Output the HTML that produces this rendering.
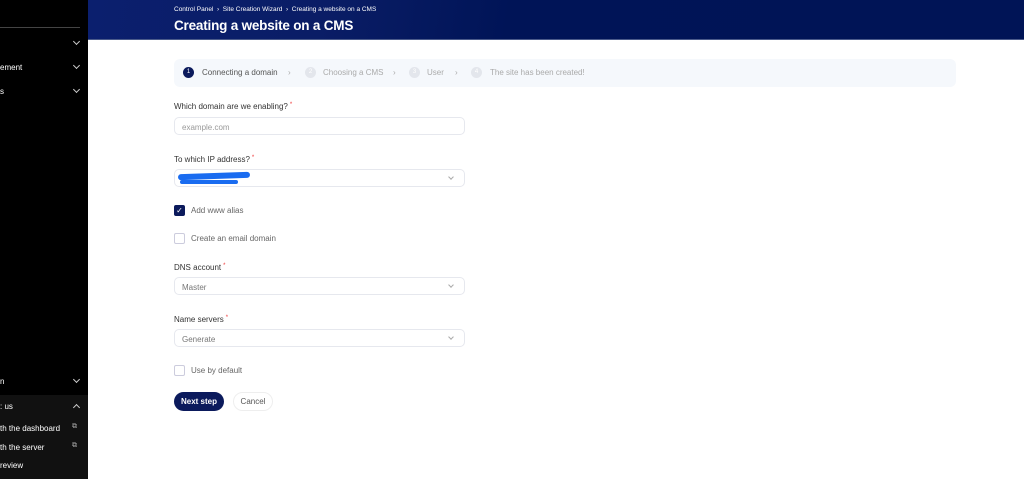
<!DOCTYPE html><html><head><style>
*{margin:0;padding:0;box-sizing:border-box}
body{width:1024px;height:479px;overflow:hidden;background:#fff;font-family:"Liberation Sans",sans-serif;position:relative}
.a{position:absolute}
.sb{left:0;top:0;width:88px;height:479px;background:#000}
.st{color:#fff;font-size:8px}
.chev{position:absolute;width:5px;height:5px;border-right:1.2px solid #ccc;border-bottom:1.2px solid #ccc;transform:rotate(45deg)}
.lab{font-size:8px;color:#333;left:174px}
.lab b{color:#e33;font-weight:normal;font-size:6px;vertical-align:top;margin-left:2px}
.in{left:174px;width:291px;height:18px;border:1px solid #e6e8ee;border-radius:5px;font-size:8px;color:#777;padding:5px 7px}
.in .chev{right:11px;top:5px;border-color:#aaa;width:4px;height:4px;border-width:0 1px 1px 0}
.cb{left:174px;width:11px;height:11px;border:1px solid #ccd;border-radius:2px}
.ct{left:191px;font-size:8px;color:#666}
.step{font-size:8px;color:#aaa;top:68px}
.num{width:11px;height:11px;border-radius:50%;background:#e3e6ec;top:67px;color:#fff;font-size:6px;text-align:center;line-height:11px}
</style></head><body>
<div class="a sb"></div>
<div class="a" style="left:0;top:27px;width:80px;height:1px;background:#444"></div>
<div class="chev" style="left:74px;top:39px"></div>
<div class="a st" style="left:0;top:63px">ement</div><div class="chev" style="left:74px;top:63px"></div>
<div class="a st" style="left:0;top:87px">s</div><div class="chev" style="left:74px;top:87px"></div>
<div class="a st" style="left:0;top:377px">n</div><div class="chev" style="left:74px;top:377px"></div>
<div class="a" style="left:0;top:395px;width:88px;height:84px;background:#111"></div>
<div class="a st" style="left:0;top:402px">: us</div><div class="chev" style="left:74px;top:405px;transform:rotate(225deg)"></div>
<div class="a st" style="left:0;top:424px">th the dashboard</div><div class="a st" style="left:72px;top:423px;color:#aaa;font-size:7px">⧉</div>
<div class="a st" style="left:0;top:443px">th the server</div><div class="a st" style="left:72px;top:442px;color:#aaa;font-size:7px">⧉</div>
<div class="a st" style="left:0;top:461px">review</div>
<div class="a" style="left:88px;top:0;width:936px;height:40px;background:linear-gradient(100deg,#0b1f6e 0%,#0a1d66 25%,#001457 45%,#001456 100%);border-bottom:1px solid #4a5a8a"></div>
<div class="a" style="left:174px;top:6px;color:#fff;font-size:6.5px">Control Panel &nbsp;›&nbsp; Site Creation Wizard &nbsp;›&nbsp; Creating a website on a CMS</div>
<div class="a" style="left:174px;top:18px;color:#fff;font-size:13.5px;font-weight:bold;letter-spacing:-0.2px">Creating a website on a CMS</div>
<div class="a" style="left:174px;top:59px;width:782px;height:28px;background:#f5f8fc;border-radius:6px"></div>
<div class="a num" style="left:183px;background:#0b1a5c">1</div>
<div class="a step" style="left:202px;color:#555">Connecting a domain</div>
<div class="a step" style="left:288px">›</div>
<div class="a num" style="left:305px">2</div><div class="a step" style="left:323px">Choosing a CMS</div>
<div class="a step" style="left:393px">›</div>
<div class="a num" style="left:409px">3</div><div class="a step" style="left:427px">User</div>
<div class="a step" style="left:455px">›</div>
<div class="a num" style="left:471px">4</div><div class="a step" style="left:490px">The site has been created!</div>
<div class="a lab" style="top:102px">Which domain are we enabling?<b>*</b></div>
<div class="a in" style="top:117px;color:#999">example.com</div>
<div class="a lab" style="top:155px">To which IP address?<b>*</b></div>
<div class="a in" style="top:169px"><div class="chev"></div></div>
<div class="a" style="left:178px;top:173px;width:72px;height:6px;background:#1a6cf0;border-radius:3px;transform:rotate(-2deg)"></div>
<div class="a" style="left:180px;top:180px;width:58px;height:4px;background:#1a6cf0;border-radius:2px"></div>
<div class="a cb" style="top:205px;background:#0b1a5c;border-color:#0b1a5c;color:#fff;font-size:8px;line-height:9px;text-align:center">✓</div>
<div class="a ct" style="top:206px">Add www alias</div>
<div class="a cb" style="top:233px"></div><div class="a ct" style="top:234px">Create an email domain</div>
<div class="a lab" style="top:263px">DNS account<b>*</b></div>
<div class="a in" style="top:277px">Master<div class="chev"></div></div>
<div class="a lab" style="top:315px">Name servers<b>*</b></div>
<div class="a in" style="top:329px">Generate<div class="chev"></div></div>
<div class="a cb" style="top:365px"></div><div class="a ct" style="top:366px">Use by default</div>
<div class="a" style="left:174px;top:392px;width:50px;height:19px;border-radius:10px;background:#0b1a5c;color:#fff;font-size:8px;font-weight:bold;text-align:center;line-height:19px">Next step</div>
<div class="a" style="left:233px;top:392px;width:40px;height:19px;border-radius:10px;border:1px solid #eee;color:#555;font-size:8px;text-align:center;line-height:17px">Cancel</div>
</body></html>
